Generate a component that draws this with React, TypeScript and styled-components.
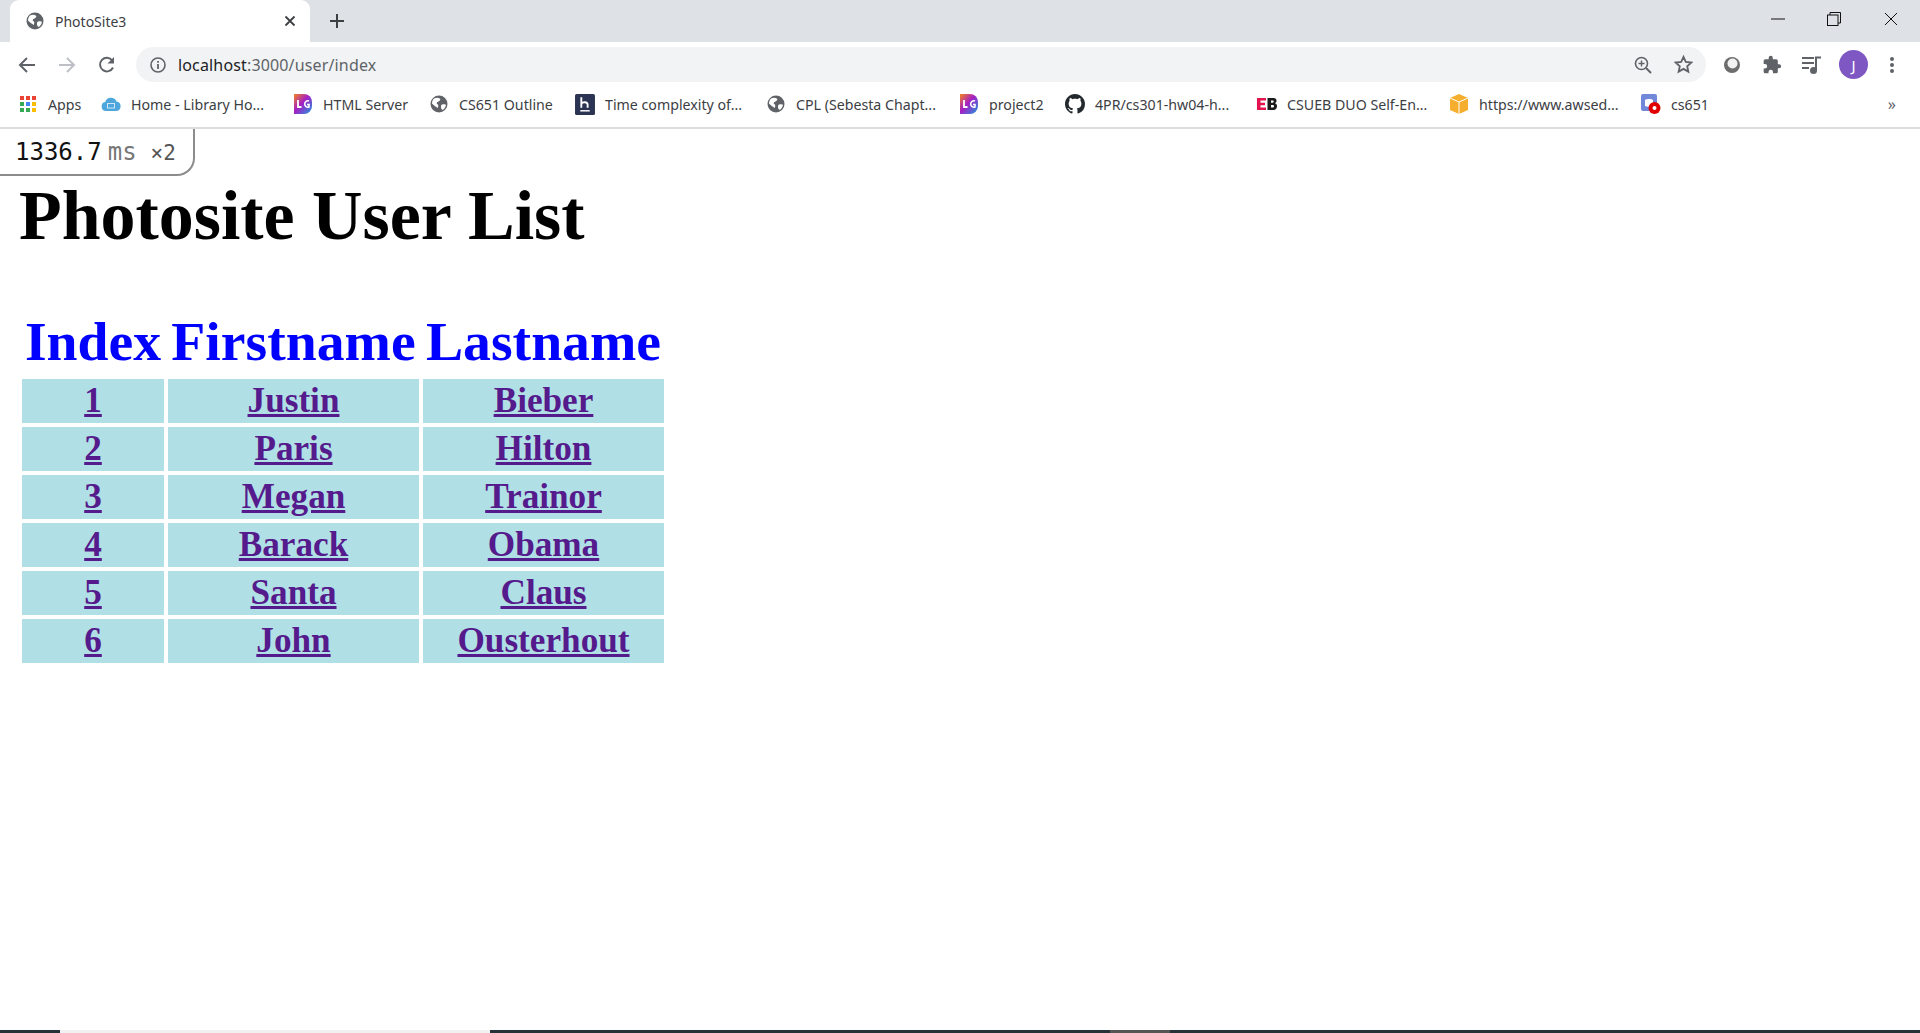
import React from "react";
import styled, { createGlobalStyle } from "styled-components";

const Global = createGlobalStyle`
  html, body { margin: 0; padding: 0; background: #fff; height: 100%; overflow: hidden; }
  #root { height: 100%; }
`;

const Shell = styled.div`
  position: relative;
  width: 1920px;
  height: 1033px;
  display: flex;
  flex-direction: column;
  overflow: hidden;
  background: #fff;
`;

const TabStrip = styled.div`
  height: 42px;
  background: #dee1e6;
  display: flex;
  align-items: flex-end;
  padding-left: 10px;
  flex: none;
`;

const Tab = styled.div`
  width: 300px;
  height: 42px;
  box-sizing: border-box;
  background: #fff;
  border-radius: 9px 9px 0 0;
  display: flex;
  align-items: center;
  padding: 0 14px 0 16px;
  font: 14px "Noto Sans", sans-serif;
  color: #3c4043;
`;

const TabTitle = styled.span`
  margin-left: 11px;
  flex: 1;
`;

const NewTab = styled.div`
  width: 24px;
  height: 24px;
  margin: 0 0 9px 15px;
  display: flex;
  align-items: center;
  justify-content: center;
`;

const WindowControls = styled.div`
  margin-left: auto;
  height: 42px;
  display: flex;
  align-items: center;
  padding-bottom: 5px;
  box-sizing: border-box;
`;

const WindowButton = styled.div<{ $w: number }>`
  width: ${(p) => p.$w}px;
  height: 36px;
  display: flex;
  align-items: center;
  justify-content: center;
`;

const Toolbar = styled.div`
  height: 44px;
  box-sizing: border-box;
  flex: none;
  display: flex;
  align-items: center;
  background: #fff;
  padding: 1px 0 0 15px;
`;

const NavButton = styled.div`
  width: 24px;
  height: 24px;
  margin-right: 16px;
  display: flex;
  align-items: center;
  justify-content: center;
`;

const Omnibox = styled.div`
  width: 1570px;
  height: 35px;
  margin-left: 1px;
  border-radius: 18px;
  background: #f1f3f4;
  display: flex;
  align-items: center;
  padding: 0 3px 0 14px;
  box-sizing: border-box;
  font: 16px "Noto Sans", sans-serif;
  color: #5f6368;
`;

const Host = styled.span`
  color: #202124;
`;

const UrlText = styled.span`
  margin-left: 12px;
  flex: 1;
  letter-spacing: 0.15px;
`;

const ActionIcon = styled.div`
  width: 40px;
  height: 24px;
  display: flex;
  align-items: center;
  justify-content: center;
`;

const Extensions = styled.div`
  display: flex;
  align-items: center;
  margin-left: 6px;
`;

const Avatar = styled.div`
  width: 29px;
  height: 29px;
  border-radius: 50%;
  background: #7e57c2;
  color: #fff;
  font: 15px "Noto Sans", sans-serif;
  display: flex;
  align-items: center;
  justify-content: center;
  margin-left: 7px;
`;

const MoreButton = styled(ActionIcon)`
  margin-left: 4px;
`;

const Bookmarks = styled.div`
  height: 43px;
  flex: none;
  box-sizing: border-box;
  border-bottom: 2px solid #dadce0;
  display: flex;
  align-items: center;
  padding: 0 0 5px 19px;
  position: relative;
  background: #fff;
`;

const Bookmark = styled.div<{ $w: number }>`
  width: ${(p) => p.$w}px;
  flex: none;
  display: flex;
  align-items: center;
  font: 14.2px "Noto Sans", sans-serif;
  color: #3c4043;
  white-space: nowrap;
`;

const BookmarkIcon = styled.div`
  width: 18px;
  height: 18px;
  flex: none;
  display: flex;
  align-items: center;
  justify-content: center;
  & > svg {
    flex: none;
  }
`;

const BookmarkLabel = styled.span`
  margin-left: 11px;
`;

const Overflow = styled.div`
  margin-left: auto;
  margin-right: 24px;
  font: 16px "Noto Sans", sans-serif;
  color: #5f6368;
`;

const Badge = styled.div`
  position: absolute;
  left: 0;
  top: 129px;
  width: 195px;
  height: 47px;
  box-sizing: border-box;
  background: #fff;
  border-right: 2px solid #8c8c8c;
  border-bottom: 2px solid #8c8c8c;
  border-radius: 0 0 18px 0;
  padding: 9px 0 0 15px;
  font: 24px "DejaVu Sans Mono", monospace;
  color: #111;
  white-space: nowrap;
  z-index: 2;
`;

const BadgeUnit = styled.span`
  color: #777;
  margin-left: 6px;
`;

const BadgeCount = styled.span`
  color: #555;
  font-size: 21px;
  margin-left: 14px;
`;

const Page = styled.main`
  flex: 1;
  padding: 47px 0 0 18px;
  font-family: "Liberation Serif", "Times New Roman", serif;
`;

const Title = styled.h1`
  margin: 0 0 48px 1px;
  font-size: 69.9px;
  line-height: 80px;
  font-weight: 700;
  color: #000;
`;

const Table = styled.table`
  border-collapse: separate;
  border-spacing: 4px;
  table-layout: fixed;
  width: 650px;
`;

const Head = styled.th<{ $w: number }>`
  width: ${(p) => p.$w}px;
  color: #0000ff;
  font-size: 55.7px;
  line-height: 67px;
  padding: 0;
  font-weight: 700;
  text-align: center;
`;

const Cell = styled.td`
  background: #b0e0e6;
  text-align: center;
  height: 44px;
  padding: 0;
  font-size: 35.2px;
  line-height: 44px;
  font-weight: 700;
`;

const UserLink = styled.a`
  color: #551a8b;
  text-decoration: underline;
`;

const BottomBar = styled.div`
  position: absolute;
  left: 0;
  right: 0;
  bottom: 0;
  height: 3px;
  background: #263238;
  display: flex;
`;

const BarSlot = styled.div<{ $left: number; $w: number; $c: string }>`
  margin-left: ${(p) => p.$left}px;
  width: ${(p) => p.$w}px;
  background: ${(p) => p.$c};
  flex: none;
`;

const Globe = ({ s = 18 }: { s?: number }) => (
  <svg width={s} height={s} viewBox="0 0 18 18">
    <circle cx="9" cy="9" r="8.5" fill="#5f6368" />
    <path d="M4 3.5c2-.8 4.5-1 6 .2 1 .9-.7 2.6-2 3-1.500.5-1.700 2-.5 2.600 1 .5 1 2.200.2 3.700C6 12 3.500 10 2 8.500 2 6.500 2.800 4.500 4 3.500zM12 9.500c1.500-.5 3.300-.5 4 .2-.3 2-1.500 4-3.200 5.200-1 0-1.800-1.700-1.800-2.900 0-1 0-2.100 1-2.500z" fill="#fff" />
  </svg>
);

const Lg = () => (
  <svg width="18" height="20" viewBox="0 0 18 20">
    <defs>
      <linearGradient id="lg" x1="0" y1="0" x2="1" y2="1">
        <stop offset="0" stopColor="#f5841f" />
        <stop offset=".45" stopColor="#a51fc4" />
        <stop offset="1" stopColor="#1d9be0" />
      </linearGradient>
    </defs>
    <path d="M0 0h10a8 8 0 0 1 8 8v4a8 8 0 0 1-8 8H0z" fill="url(#lg)" />
    <path d="M4 6v7h3.500" stroke="#fff" strokeWidth="1.800" fill="none" />
    <path d="M15 7a3.200 3.200 0 1 0 0 6v-2.500h-2" stroke="#fff" strokeWidth="1.600" fill="none" />
  </svg>
);

const AppsIcon = () => (
  <svg width="16" height="16" viewBox="0 0 16 16">
    {["#ea4335", "#ea4335", "#ea4335", "#34a853", "#4285f4", "#fbbc04", "#34a853", "#34a853", "#fbbc04"].map((c, i) => (
      <rect key={i} x={(i % 3) * 6} y={Math.floor(i / 3) * 6} width="4" height="4" fill={c} />
    ))}
  </svg>
);

const CloudIcon = () => (
  <svg width="20" height="14" viewBox="0 0 20 14">
    <path d="M5 14a4.500 4.500 0 0 1-.8-8.900A6 6 0 0 1 15.500 4.500 4.800 4.800 0 0 1 15.500 14z" fill="#4ea6dc" />
    <rect x="6.500" y="6.500" width="7" height="4.500" fill="none" stroke="#cfe6f5" strokeWidth="1" />
  </svg>
);

const HashnodeIcon = () => (
  <svg width="20" height="21" viewBox="0 0 19 20">
    <rect width="19" height="20" rx="1.500" fill="#2b3553" />
    <path d="M6 3v10M6 9c1-1.500 6-2 6 1v3" stroke="#fff" strokeWidth="1.800" fill="none" />
    <path d="M5 16h9" stroke="#fff" strokeWidth="1.400" />
  </svg>
);

const GithubIcon = () => (
  <svg width="20" height="20" viewBox="0 0 16 16">
    <path
      fill="#24292e"
      d="M8 0C3.580 0 0 3.580 0 8c0 3.540 2.290 6.530 5.470 7.590.4.070.55-.17.55-.38 0-.19-.01-.82-.01-1.490-2.010.37-2.530-.49-2.690-.94-.09-.23-.48-.94-.82-1.130-.28-.15-.68-.52-.01-.53.63-.01 1.080.58 1.230.82.72 1.210 1.870.87 2.330.66.070-.52.28-.87.51-1.070-1.780-.2-3.640-.89-3.640-3.950 0-.87.31-1.590.82-2.150-.08-.2-.36-1.020.08-2.120 0 0 .67-.21 2.200.82.64-.18 1.320-.27 2-.27s1.360.09 2 .27c1.530-1.040 2.200-.82 2.200-.82.44 1.100.16 1.920.08 2.120.51.56.82 1.270.82 2.150 0 3.070-1.870 3.750-3.650 3.950.29.25.54.73.54 1.480 0 1.070-.01 1.930-.01 2.200 0 .21.15.46.55.38A8.010 8.010 0 0 0 16 8c0-4.420-3.580-8-8-8z"
    />
  </svg>
);

const EbIcon = () => (
  <svg width="20" height="12" viewBox="0 0 20 12">
    <path d="M0 0h9v2.500H3.500v2.200H8v2.500H3.500v2.300H9V12H0z" fill="#e3134f" />
    <path d="M10.500 0h6c2 0 3 1 3 2.800 0 1.200-.6 2-1.500 2.400 1.200.4 2 1.300 2 2.800 0 2.400-1.500 4-3.500 4h-6zM14 2.500v2.200h1.800c1.200 0 1.200-2.200 0-2.200zM14 7v2.500h2c1.300 0 1.300-2.500 0-2.500z" fill="#1b1b1b" />
  </svg>
);

const BoxIcon = () => (
  <svg width="18" height="20" viewBox="0 0 18 20">
    <path d="M9 0l9 4v12l-9 4-9-4V4z" fill="#f5ae2d" />
    <path d="M0 4l9 4 9-4M9 8v12" stroke="#fff" strokeWidth="1" fill="none" />
  </svg>
);

const DiscordIcon = () => (
  <svg width="20" height="20" viewBox="0 0 20 20">
    <rect width="16" height="17" rx="2" fill="#7289da" />
    <path d="M4 6c2-1.300 6-1.300 8 0v6c-2 1-6 1-8 0z" fill="#fff" />
    <circle cx="13.500" cy="14" r="6" fill="#e00000" />
    <circle cx="13.500" cy="14" r="2" fill="#fff" />
  </svg>
);

const bookmarks: { label: string; w: number; icon: React.ReactNode }[] = [
  { label: "Apps", w: 83, icon: <AppsIcon /> },
  { label: "Home - Library Ho...", w: 192, icon: <CloudIcon /> },
  { label: "HTML Server", w: 136, icon: <Lg /> },
  { label: "CS651 Outline", w: 146, icon: <Globe /> },
  { label: "Time complexity of...", w: 191, icon: <HashnodeIcon /> },
  { label: "CPL (Sebesta Chapt...", w: 193, icon: <Globe /> },
  { label: "project2", w: 106, icon: <Lg /> },
  { label: "4PR/cs301-hw04-h...", w: 192, icon: <GithubIcon /> },
  { label: "CSUEB DUO Self-En...", w: 192, icon: <EbIcon /> },
  { label: "https://www.awsed...", w: 192, icon: <BoxIcon /> },
  { label: "cs651", w: 100, icon: <DiscordIcon /> },
];

const users = [
  ["1", "Justin", "Bieber"],
  ["2", "Paris", "Hilton"],
  ["3", "Megan", "Trainor"],
  ["4", "Barack", "Obama"],
  ["5", "Santa", "Claus"],
  ["6", "John", "Ousterhout"],
];

export default function App() {
  return (
    <Shell>
      <Global />
      <TabStrip>
        <Tab>
          <Globe />
          <TabTitle>PhotoSite3</TabTitle>
          <svg width="12" height="12" viewBox="0 0 12 12">
            <path d="M1.500 1.500l9 9M10.500 1.500l-9 9" stroke="#3c4043" strokeWidth="1.800" />
          </svg>
        </Tab>
        <NewTab>
          <svg width="16" height="16" viewBox="0 0 16 16">
            <path d="M8 1v14M1 8h14" stroke="#3c4043" strokeWidth="2" />
          </svg>
        </NewTab>
        <WindowControls>
          <WindowButton $w={56}>
            <svg width="14" height="2" viewBox="0 0 14 2"><path d="M0 1h14" stroke="#111" strokeWidth="1" /></svg>
          </WindowButton>
          <WindowButton $w={56}>
            <svg width="14" height="14" viewBox="0 0 14 14">
              <rect x=".5" y="3" width="10.500" height="10.500" fill="none" stroke="#111" />
              <path d="M3 3V.5h10.500V11H11" fill="none" stroke="#111" />
            </svg>
          </WindowButton>
          <WindowButton $w={58}>
            <svg width="14" height="14" viewBox="0 0 14 14"><path d="M1 1l12 12M13 1L1 13" stroke="#111" strokeWidth="1" /></svg>
          </WindowButton>
        </WindowControls>
      </TabStrip>
      <Toolbar>
        <NavButton>
          <svg width="18" height="18" viewBox="0 0 18 18"><path d="M17 9H2.500M9 2L2 9l7 7" fill="none" stroke="#5f6368" strokeWidth="2" /></svg>
        </NavButton>
        <NavButton>
          <svg width="18" height="18" viewBox="0 0 18 18"><path d="M1 9h14.500M9 2l7 7-7 7" fill="none" stroke="#bdc1c6" strokeWidth="2" /></svg>
        </NavButton>
        <NavButton>
          <svg width="18" height="18" viewBox="0 0 18 18">
            <path d="M15 11.500A6.800 6.800 0 1 1 14.300 4.500" fill="none" stroke="#5f6368" strokeWidth="2" />
            <path d="M16 1v6.500H9.500z" fill="#5f6368" />
          </svg>
        </NavButton>
        <Omnibox>
          <svg width="16" height="16" viewBox="0 0 16 16">
            <circle cx="8" cy="8" r="7" fill="none" stroke="#5f6368" strokeWidth="1.600" />
            <path d="M8 7v5M8 4v1.800" stroke="#5f6368" strokeWidth="1.800" />
          </svg>
          <UrlText><Host>localhost</Host>:3000/user/index</UrlText>
          <ActionIcon>
            <svg width="18" height="18" viewBox="0 0 18 18">
              <circle cx="7.500" cy="7.500" r="6" fill="none" stroke="#5f6368" strokeWidth="1.600" />
              <path d="M12 12l5 5" stroke="#5f6368" strokeWidth="2" />
              <path d="M7.500 4.500v6M4.500 7.500h6" stroke="#5f6368" strokeWidth="1.400" />
            </svg>
          </ActionIcon>
          <ActionIcon>
            <svg width="19" height="19" viewBox="0 0 20 20">
              <path d="M10 2l2.400 5.300 5.800.6-4.300 3.900 1.200 5.700L10 14.600l-5.100 2.900 1.200-5.700L1.800 7.900l5.800-.6z" fill="none" stroke="#5f6368" strokeWidth="1.900" />
            </svg>
          </ActionIcon>
        </Omnibox>
        <Extensions>
          <ActionIcon>
            <svg width="18" height="18" viewBox="0 0 18 18">
              <circle cx="9" cy="9" r="8" fill="#6d6d6d" />
              <circle cx="9.500" cy="7.500" r="5" fill="#f2f2f2" />
            </svg>
          </ActionIcon>
          <ActionIcon>
            <svg width="20" height="20" viewBox="0 0 24 24">
              <path fill="#5f6368" d="M20.500 11H19V7a2 2 0 0 0-2-2h-4V3.500a2.500 2.500 0 0 0-5 0V5H4a2 2 0 0 0-2 2v3.800h1.500a2.700 2.700 0 0 1 0 5.400H2V20a2 2 0 0 0 2 2h3.800v-1.500a2.700 2.700 0 0 1 5.400 0V22H17a2 2 0 0 0 2-2v-4h1.500a2.500 2.500 0 0 0 0-5z" />
            </svg>
          </ActionIcon>
          <ActionIcon>
            <svg width="20" height="18" viewBox="0 0 20 18">
              <path d="M0 2h12M0 7h12M0 12h7" stroke="#5f6368" strokeWidth="2" />
              <path d="M14 15V1.500h5" fill="none" stroke="#5f6368" strokeWidth="2" />
              <circle cx="11.500" cy="14.500" r="3.500" fill="#5f6368" />
            </svg>
          </ActionIcon>
          <Avatar>J</Avatar>
          <MoreButton>
            <svg width="4" height="16" viewBox="0 0 4 16">
              <circle cx="2" cy="2" r="2" fill="#5f6368" />
              <circle cx="2" cy="8" r="2" fill="#5f6368" />
              <circle cx="2" cy="14" r="2" fill="#5f6368" />
            </svg>
          </MoreButton>
        </Extensions>
      </Toolbar>
      <Bookmarks>
        {bookmarks.map((b) => (
          <Bookmark key={b.label} $w={b.w}>
            <BookmarkIcon>{b.icon}</BookmarkIcon>
            <BookmarkLabel>{b.label}</BookmarkLabel>
          </Bookmark>
        ))}
        <Overflow>»</Overflow>
      </Bookmarks>
      <Badge>
        1336.7<BadgeUnit>ms</BadgeUnit><BadgeCount>×2</BadgeCount>
      </Badge>
      <Page>
        <Title>Photosite User List</Title>
        <Table>
          <thead>
            <tr>
              <Head $w={142}>Index</Head>
              <Head $w={251}>Firstname</Head>
              <Head $w={241}>Lastname</Head>
            </tr>
          </thead>
          <tbody>
            {users.map((u) => (
              <tr key={u[0]}>
                {u.map((v) => (
                  <Cell key={v}>
                    <UserLink href="#">{v}</UserLink>
                  </Cell>
                ))}
              </tr>
            ))}
          </tbody>
        </Table>
      </Page>
      <BottomBar>
        <BarSlot $left={60} $w={430} $c="#f1f1f1" />
        <BarSlot $left={620} $w={60} $c="#555" />
      </BottomBar>
    </Shell>
  );
}
